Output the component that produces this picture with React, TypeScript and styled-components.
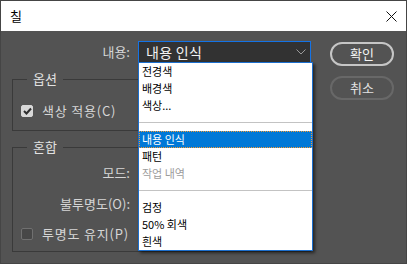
import React from 'react';
import styled, { createGlobalStyle } from 'styled-components';

type MenuKind = 'item' | 'sep' | 'selected' | 'disabled';

const menuItems: { label: string; kind: MenuKind }[] = [
  { label: '전경색', kind: 'item' },
  { label: '배경색', kind: 'item' },
  { label: '색상...', kind: 'item' },
  { label: '', kind: 'sep' },
  { label: '내용 인식', kind: 'selected' },
  { label: '패턴', kind: 'item' },
  { label: '작업 내역', kind: 'disabled' },
  { label: '', kind: 'sep' },
  { label: '검정', kind: 'item' },
  { label: '50% 회색', kind: 'item' },
  { label: '흰색', kind: 'item' },
];

const App: React.FC = () => {
  return (
    <>
      <GlobalStyle />
      <Window>
        <TitleBar>
          <Title>칠</Title>
          <CloseButton>
            <svg width="11" height="11" viewBox="0 0 11 11">
              <path d="M0.5 0.5 L10.5 10.5 M10.5 0.5 L0.5 10.5" stroke="#111" strokeWidth="1" />
            </svg>
          </CloseButton>
        </TitleBar>
        <Body>
          <Main>
            <FieldRow>
              <FieldLabel $w={118}>내용:</FieldLabel>
              <SelectWrap>
                <Select>
                  <span>내용 인식</span>
                  <svg width="10" height="6" viewBox="0 0 10 6">
                    <path d="M0.5 0.5 L5 5 L9.5 0.5" stroke="#9a9a9a" strokeWidth="1" fill="none" />
                  </svg>
                </Select>
                <Menu>
                  {menuItems.map((m, i) =>
                    m.kind === 'sep' ? (
                      <MenuSeparator key={i} />
                    ) : (
                      <MenuItem key={i} $kind={m.kind}>
                        {m.label}
                      </MenuItem>
                    )
                  )}
                </Menu>
              </SelectWrap>
            </FieldRow>

            <Group $pt={14} $pb={9}>
              <Legend>옵션</Legend>
              <CheckRow>
                <CheckBox $checked>
                  <svg width="9" height="8" viewBox="0 0 9 8">
                    <path d="M1 4 L3.5 6.5 L8 1.5" stroke="#2e2e2e" strokeWidth="2" fill="none" />
                  </svg>
                </CheckBox>
                <CheckLabel>색상 적용(C)</CheckLabel>
              </CheckRow>
            </Group>

            <Group $pt={7} $pb={7}>
              <Legend>혼합</Legend>
              <GroupRows>
                <FieldRow>
                  <FieldLabel $w={117}>모드:</FieldLabel>
                  <HiddenControl />
                </FieldRow>
                <FieldRow>
                  <FieldLabel $w={117}>불투명도(O):</FieldLabel>
                  <HiddenControl />
                </FieldRow>
                <CheckRow>
                  <CheckBox />
                  <CheckLabel>투명도 유지(P)</CheckLabel>
                </CheckRow>
              </GroupRows>
            </Group>
          </Main>

          <Buttons>
            <PillButton $primary>확인</PillButton>
            <PillButton>취소</PillButton>
          </Buttons>
        </Body>
      </Window>
    </>
  );
};

export default App;

const GlobalStyle = createGlobalStyle`
  html, body {
    margin: 0;
    padding: 0;
    background: #535353;
  }
  body {
    font-family: "Noto Sans CJK KR", "Noto Sans", sans-serif;
  }
`;

const Window = styled.div`
  width: 407px;
  height: 264px;
  box-sizing: border-box;
  border: 1px solid #454545;
  background: #535353;
  display: flex;
  flex-direction: column;
  overflow: hidden;
`;

const TitleBar = styled.div`
  height: 30px;
  flex-shrink: 0;
  background: #ffffff;
  display: flex;
  align-items: center;
  justify-content: space-between;
  padding: 0 9px 0 9px;
`;

const Title = styled.div`
  font-size: 13px;
  line-height: 16px;
  color: #000;
`;

const CloseButton = styled.div`
  display: flex;
  width: 11px;
  height: 11px;
`;

const Body = styled.div`
  display: flex;
  padding: 10px 0 0 11px;
`;

const Main = styled.div`
  width: 299px;
  display: flex;
  flex-direction: column;
`;

const FieldRow = styled.div`
  display: flex;
  align-items: center;
  gap: 8px;
  height: 22px;
`;

const FieldLabel = styled.div<{ $w: number }>`
  width: ${({ $w }) => $w}px;
  text-align: right;
  font-size: 13px;
  line-height: 16px;
  color: #d6d6d6;
  white-space: nowrap;
`;

const SelectWrap = styled.div`
  position: relative;
  width: 173px;
  height: 22px;
`;

const Select = styled.div`
  box-sizing: border-box;
  height: 22px;
  border: 1px solid #1473e6;
  background: #323232;
  color: #f2f2f2;
  font-size: 14px;
  line-height: 18px;
  letter-spacing: 0.3px;
  display: flex;
  align-items: center;
  justify-content: space-between;
  padding: 0 4px 0 7px;
`;

const Menu = styled.div`
  position: absolute;
  z-index: 10;
  left: 0;
  top: 21px;
  width: 175px;
  box-sizing: border-box;
  border: 1px solid #1c6fce;
  background: #ffffff;
  box-shadow: 2px 2px 3px rgba(0, 0, 0, 0.55);
`;

const MenuItem = styled.div<{ $kind: MenuKind }>`
  height: 17px;
  box-sizing: border-box;
  padding-left: 3px;
  font-size: 11px;
  line-height: 17px;
  white-space: nowrap;
  color: ${({ $kind }) => ($kind === 'disabled' ? '#9c9c9c' : $kind === 'selected' ? '#ffffff' : '#000000')};
  background: ${({ $kind }) => ($kind === 'selected' ? '#0078d7' : 'transparent')};
  outline: ${({ $kind }) => ($kind === 'selected' ? '1px dotted #f39a34' : 'none')};
  outline-offset: -1px;
`;

const MenuSeparator = styled.div`
  height: 17px;
  display: flex;
  align-items: center;

  &::after {
    content: '';
    display: block;
    width: 100%;
    height: 1px;
    background: #c3c3c3;
  }
`;

const Group = styled.fieldset<{ $pt: number; $pb: number }>`
  margin: 8px 0 0 0;
  padding: ${({ $pt }) => $pt}px 0 ${({ $pb }) => $pb}px 0;
  border: 1px solid #3a3a3a;
  min-width: 0;
`;

const Legend = styled.legend`
  margin-left: 14px;
  padding: 0 6px;
  font-size: 13px;
  line-height: 16px;
  color: #e2e2e2;
`;

const GroupRows = styled.div`
  display: flex;
  flex-direction: column;
  gap: 9px;
`;

const CheckRow = styled.div`
  display: flex;
  align-items: center;
  gap: 9px;
  height: 20px;
  padding-left: 8px;
`;

const CheckBox = styled.div<{ $checked?: boolean }>`
  width: 12px;
  height: 12px;
  box-sizing: border-box;
  border-radius: 2px;
  display: flex;
  align-items: center;
  justify-content: center;
  background: ${({ $checked }) => ($checked ? '#d8d8d8' : '#474747')};
  border: 1px solid ${({ $checked }) => ($checked ? '#d8d8d8' : '#707070')};
`;

const CheckLabel = styled.div`
  font-size: 13px;
  line-height: 16px;
  letter-spacing: 0.8px;
  color: #d6d6d6;
  white-space: nowrap;
`;

const HiddenControl = styled.div`
  width: 160px;
  height: 20px;
  background: #3a3a3a;
`;

const Buttons = styled.div`
  margin-left: 19px;
  padding-top: 1px;
  display: flex;
  flex-direction: column;
  gap: 10px;
`;

const PillButton = styled.div<{ $primary?: boolean }>`
  width: 64px;
  height: 24px;
  box-sizing: border-box;
  border-radius: 12px;
  border: 2px solid ${({ $primary }) => ($primary ? '#c6c6c6' : '#686868')};
  color: ${({ $primary }) => ($primary ? '#f4f4f4' : '#e2e2e2')};
  font-size: 13px;
  line-height: 16px;
  display: flex;
  align-items: center;
  justify-content: center;
`;
